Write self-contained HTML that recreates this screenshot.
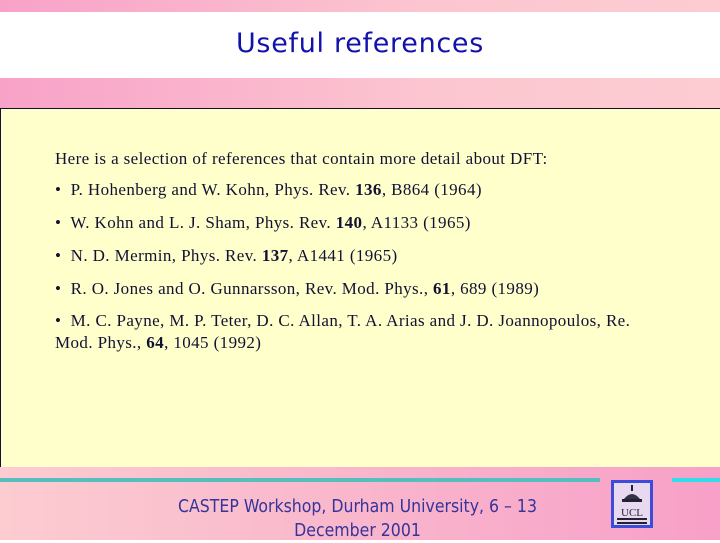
<!DOCTYPE html>
<html><head><style>
body{margin:0;width:720px;height:540px;overflow:hidden;position:relative;font-family:"Liberation Serif",serif;}
.top{position:absolute;left:0;top:0;width:720px;height:108px;background:linear-gradient(90deg,#f8a2c8,#fcc6d0 60%,#fcccd2);}
.hdr{position:absolute;left:0;top:12px;width:720px;height:66px;background:#fff;text-align:center;}
.hdr span{font-family:"DejaVu Sans","Liberation Sans",sans-serif;font-size:27px;color:#1212aa;line-height:64px;letter-spacing:0.7px;}
.box{position:absolute;left:0;top:108px;width:730px;height:358px;background:#ffffcc;border:1px solid #111133;}
.foot{position:absolute;left:0;top:467px;width:720px;height:73px;background:linear-gradient(90deg,#fcccd0,#f9b6cc 50%,#f8a0c8);}
.l1{position:absolute;left:0;top:478px;width:600px;height:4px;background:#55bfc0;}
.l2{position:absolute;left:672px;top:478px;width:48px;height:4px;background:#33dde8;}
.t{position:absolute;left:55px;font-size:17px;color:#111133;white-space:nowrap;letter-spacing:0.4px;}
.ft{position:absolute;left:100px;width:515px;top:495px;text-align:center;font-family:"DejaVu Sans Condensed","Liberation Sans Narrow",sans-serif;font-size:17.5px;line-height:24px;color:#34349a;}
.logo{position:absolute;left:611px;top:480px;width:42px;height:48px;background:#3a4cd8;}
.logo .in{position:absolute;left:3px;top:3px;width:36px;height:42px;background:#e8d8f0;}
</style></head><body>
<div class="top"></div>
<div class="hdr"><span>Useful references</span></div>
<div class="box"></div>
<div class="t" style="top:149px">Here is a selection of references that contain more detail about DFT:</div>
<div class="t" style="top:180px">•&nbsp; P. Hohenberg and W. Kohn, Phys. Rev. <b>136</b>, B864 (1964)</div>
<div class="t" style="top:213px">•&nbsp; W. Kohn and L. J. Sham, Phys. Rev. <b>140</b>, A1133 (1965)</div>
<div class="t" style="top:246px">•&nbsp; N. D. Mermin, Phys. Rev. <b>137</b>, A1441 (1965)</div>
<div class="t" style="top:279px">•&nbsp; R. O. Jones and O. Gunnarsson, Rev. Mod. Phys., <b>61</b>, 689 (1989)</div>
<div class="t" style="top:311px">•&nbsp; M. C. Payne, M. P. Teter, D. C. Allan, T. A. Arias and J. D. Joannopoulos, Re.</div>
<div class="t" style="top:333px">Mod. Phys., <b>64</b>, 1045 (1992)</div>
<div class="foot"></div>
<div class="l1"></div><div class="l2"></div>
<div class="ft">CASTEP Workshop, Durham University, 6 – 13<br>December 2001</div>
<div class="logo"><div class="in">
<svg width="36" height="42" viewBox="0 0 36 42">
<rect x="17" y="2" width="2" height="6" fill="#223"/>
<path d="M10 16 Q18 6 26 16 Z" fill="#334"/>
<rect x="8" y="16" width="20" height="3" fill="#223"/>
<text x="18" y="33" font-family="Liberation Serif,serif" font-size="11" text-anchor="middle" fill="#223">UCL</text>
<rect x="3" y="35" width="30" height="2" fill="#223"/>
<rect x="3" y="39" width="30" height="2" fill="#223"/>
</svg></div></div>
</body></html>
